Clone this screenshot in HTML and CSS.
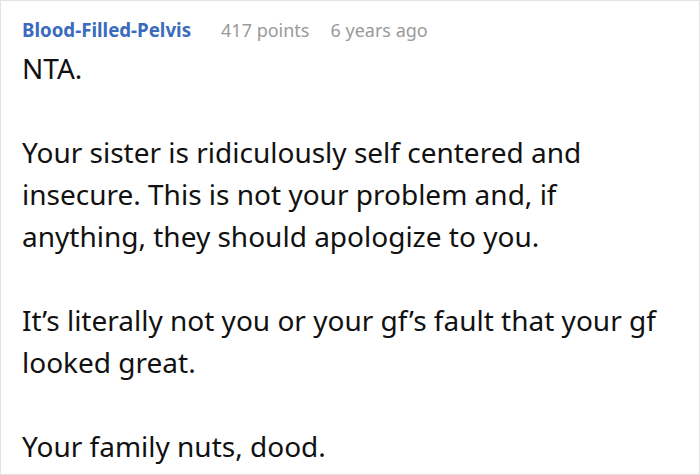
FILE: index.html
```html
<!DOCTYPE html>
<html>
<head>
<meta charset="utf-8">
<link rel="stylesheet" href="styles.css">
</head>
<body>
<div class="comment">
  <div class="meta">
    <span class="author">Blood-Filled-Pelvis</span>
    <span class="points">417 points</span>
    <span class="time">6 years ago</span>
  </div>
  <div class="body">
    <p>NTA.</p>
    <p>Your sister is ridiculously self centered and insecure. This is not your problem and, if anything, they should apologize to you.</p>
    <p>It’s literally not you or your gf’s fault that your gf looked great.</p>
    <p>Your family nuts, dood.</p>
  </div>
</div>
</body>
</html>
```

FILE: styles.css
```css
html, body {
  margin: 0;
  padding: 0;
  background: #fff;
}
.comment {
  box-sizing: border-box;
  width: 700px;
  height: 475px;
  border: 1px solid #e2e2e2;
  padding: 12px 21px 0 21px;
  font-family: "Noto Sans", "Open Sans", sans-serif;
  overflow: hidden;
}
.meta {
  display: flex;
  align-items: baseline;
  font-size: 18px;
  line-height: 33px;
}
.author {
  font-size: 18.7px;
  font-weight: 700;
  color: #3a6bbd;
}
.points {
  color: #9a9a9a;
  margin-left: 30px;
}
.time {
  color: #9a9a9a;
  margin-left: 21px;
}
.body {
  font-size: 28px;
  line-height: 42px;
  color: #111;
}
.body p {
  margin: 0 0 42px 0;
}
```
